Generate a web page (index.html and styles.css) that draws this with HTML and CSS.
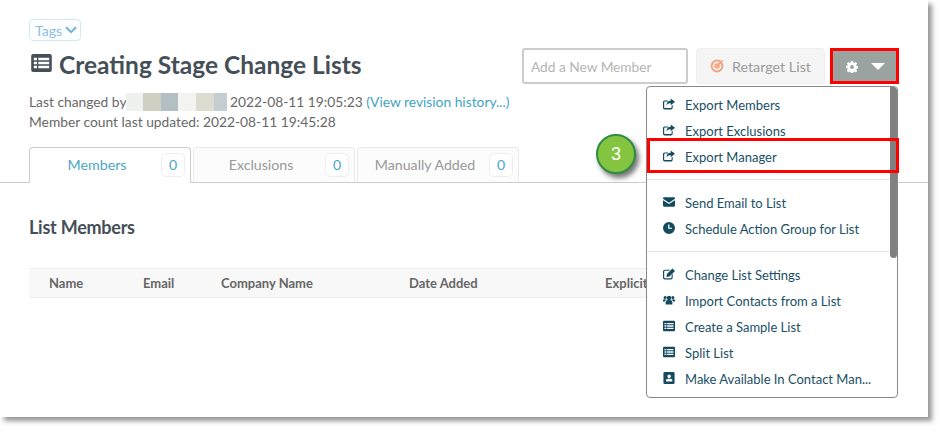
FILE: index.html
```html
<!DOCTYPE html>
<html lang="en">
<head>
<meta charset="utf-8">
<title>Creating Stage Change Lists</title>
<link rel="stylesheet" href="styles.css">
</head>
<body>
<svg class="defs" width="0" height="0" aria-hidden="true">
  <symbol id="i-list" viewBox="0 0 16 14"><path fill-rule="evenodd" d="M1.5 0h13A1.5 1.5 0 0 1 16 1.5v11a1.5 1.5 0 0 1-1.500 1.500h-13A1.500 1.500 0 0 1 0 12.500v-11A1.500 1.500 0 0 1 1.500 0zM2 3v1.800h2.500V3zM5.500 3v1.800H14V3zM2 6.100v1.800h2.500V6.100zM5.500 6.100v1.800H14V6.100zM2 9.200V11h2.500V9.200zM5.500 9.200V11H14V9.200z"/></symbol>
  <symbol id="i-export" viewBox="0 0 14 13"><path d="M1.800 2.500H6v1.200H2.200a.8.800 0 0 0-.8.800v6a.8.800 0 0 0 .8.800h7a.8.800 0 0 0 .8-.8V8.500l1.300-1.100v3.500A2 2 0 0 1 9.300 12.900H2A2 2 0 0 1 0 10.900V4.300a1.800 1.800 0 0 1 1.800-1.800z"/><path d="M9 0l5 4-5 4V5.600c-2.500 0-4 .6-5 3 0-3.500 2-5.800 5-5.800z"/></symbol>
  <symbol id="i-mail" viewBox="0 0 14 11"><path d="M1.300 0h11.400A1.300 1.300 0 0 1 14 1.300v.5L7 6.300 0 1.800v-.5A1.300 1.300 0 0 1 1.300 0z"/><path d="M0 3.400l7 4.500 7-4.500v6.300A1.300 1.300 0 0 1 12.700 11H1.300A1.300 1.300 0 0 1 0 9.700z"/></symbol>
  <symbol id="i-clock" viewBox="0 0 14 14"><path fill-rule="evenodd" d="M7 0a7 7 0 1 1 0 14A7 7 0 0 1 7 0zM6 3v5h4.500V6.600H7.500V3z"/></symbol>
  <symbol id="i-edit" viewBox="0 0 14 13"><path d="M2 1.500h6.500L7.200 2.800H2.200a.8.800 0 0 0-.8.800v7a.8.800 0 0 0 .8.800h7a.8.800 0 0 0 .8-.8V7.500l1.300-1.300v4.600A2 2 0 0 1 9.300 12.800H2a2 2 0 0 1-2-2V3.500a2 2 0 0 1 2-2z"/><path d="M11 0l3 3-6.500 6.500-3.500.6.600-3.600z"/></symbol>
  <symbol id="i-users" viewBox="0 0 16 12"><circle cx="8" cy="3.200" r="3"/><circle cx="2.800" cy="2.600" r="2"/><circle cx="13.200" cy="2.600" r="2"/><path d="M3.500 12V8.500a3 3 0 0 1 3-2.500h3a3 3 0 0 1 3 2.500V12z"/><path d="M0 8V6.500A1.500 1.500 0 0 1 1.500 5h1.800a4 4 0 0 0 .7 1A4 4 0 0 0 2.500 8zM16 8V6.500A1.500 1.500 0 0 0 14.500 5h-1.800a4 4 0 0 1-.7 1 4 4 0 0 1 1.500 2z"/></symbol>
  <symbol id="i-book" viewBox="0 0 13 14"><path fill-rule="evenodd" d="M1.500 0h10A1.500 1.500 0 0 1 13 1.500v11a1.500 1.500 0 0 1-1.500 1.500h-10A1.500 1.500 0 0 1 0 12.500v-11A1.500 1.500 0 0 1 1.500 0zM6.700 3a2.100 2.100 0 1 0 0 4.200 2.100 2.100 0 0 0 0-4.200zM3 11h7.400V9.800A1.800 1.800 0 0 0 8.600 8H4.800A1.800 1.800 0 0 0 3 9.800z"/></symbol>
  <symbol id="i-cog" viewBox="0 0 14 14"><path fill-rule="evenodd" d="M5.700 0h2.600l.3 1.800 1.200.5L11.300 1.200l1.800 1.800-1.100 1.500.5 1.200 1.800.3v2.600l-1.800.3-.5 1.200 1.100 1.500-1.800 1.800-1.500-1.100-1.200.5-.3 1.800H5.700l-.3-1.800-1.200-.5-1.500 1.100L.9 11l1.100-1.500-.5-1.200L-.3 8V5.700l1.800-.2.5-1.200L.9 3l1.800-1.800 1.500 1.100 1.200-.5zM7 4.700a2.300 2.300 0 1 0 0 4.600 2.300 2.300 0 0 0 0-4.600z"/></symbol>
</svg>

<main class="page">
  <div class="top">
    <div class="intro">
      <button class="tags" type="button">Tags
        <svg class="tags-chevron" viewBox="0 0 12 8" aria-hidden="true"><path d="M1 1.200l5 5 5-5"/></svg>
      </button>
      <h1 class="title"><svg class="title-icon" aria-hidden="true"><use href="#i-list"/></svg>Creating Stage Change Lists</h1>
      <p class="meta">Last changed by<span class="blur" aria-hidden="true"><i class="b1"></i><i class="b2"></i><i class="b3"></i><i class="b4"></i><i class="b5"></i><i class="b6"></i></span> 2022-08-11 19:05:23 <a class="link" href="#">(View revision history...)</a></p>
      <p class="meta">Member count last updated: 2022-08-11 19:45:28</p>
    </div>
    <div class="actions">
      <input class="add-member" type="text" placeholder="Add a New Member">
      <button class="retarget" type="button">
        <svg class="target" viewBox="0 0 14 14" aria-hidden="true"><circle cx="7" cy="7" r="5.400"/><circle cx="7" cy="7" r="1.800"/><path d="M7 7l5.500-5.500"/></svg>
        Retarget List
      </button>
      <button class="gear" type="button">
        <svg class="gear-icon" aria-hidden="true"><use href="#i-cog"/></svg>
        <span class="caret"></span>
      </button>
    </div>
  </div>

  <nav class="tabs">
    <a class="tab active" href="#"><span class="tab-label">Members</span><span class="count">0</span></a>
    <a class="tab" href="#"><span class="tab-label">Exclusions</span><span class="count">0</span></a>
    <a class="tab" href="#"><span class="tab-label">Manually Added</span><span class="count">0</span></a>
  </nav>

  <section class="members">
    <h2 class="members-title">List Members</h2>
    <div class="thead">
      <span>Name</span><span>Email</span><span>Company Name</span><span>Date Added</span><span>Explicit</span>
    </div>
  </section>

  <div class="menu">
    <ul class="menu-group">
      <li><svg class="mi"><use href="#i-export"/></svg>Export Members</li>
      <li><svg class="mi"><use href="#i-export"/></svg>Export Exclusions</li>
      <li><svg class="mi"><use href="#i-export"/></svg>Export Manager</li>
    </ul>
    <ul class="menu-group">
      <li><svg class="mi"><use href="#i-mail"/></svg>Send Email to List</li>
      <li><svg class="mi"><use href="#i-clock"/></svg>Schedule Action Group for List</li>
    </ul>
    <ul class="menu-group">
      <li><svg class="mi"><use href="#i-edit"/></svg>Change List Settings</li>
      <li><svg class="mi"><use href="#i-users"/></svg>Import Contacts from a List</li>
      <li><svg class="mi"><use href="#i-list"/></svg>Create a Sample List</li>
      <li><svg class="mi"><use href="#i-list"/></svg>Split List</li>
      <li><svg class="mi"><use href="#i-book"/></svg>Make Available In Contact Man...</li>
    </ul>
    <span class="scroll-thumb"></span>
  </div>

  <span class="mark mark-gear"></span>
  <span class="mark mark-export"></span>
  <span class="step">3</span>
</main>
</body>
</html>
```

FILE: styles.css
```css
* { box-sizing: border-box; }
html, body { margin: 0; padding: 0; background: #fff; }
body { width: 943px; height: 432px; overflow: hidden; font-family: Lato, "Liberation Sans", sans-serif; }
.defs { position: absolute; }

.page {
  position: relative;
  width: 928px;
  height: 417px;
  background: #fff;
  box-shadow: 4px 4px 5px rgba(90, 90, 90, .65);
  overflow: hidden;
  color: #666;
  font-size: 14px;
}

.top { display: flex; justify-content: space-between; padding: 19px 29px 0 29px; height: 147px; }
.intro { display: flex; flex-direction: column; align-items: flex-start; }

.tags {
  display: flex; align-items: center; gap: 3px;
  height: 22px; width: 52px; padding: 0 0 0 5px;
  border: 1px solid #d3e8f5; border-radius: 4px; background: #fbfdfe;
  color: #8dbfdf; font: 14px Lato, sans-serif;
}
.tags-chevron { width: 12px; height: 8px; fill: none; stroke: #6fb4dc; stroke-width: 2; }

.title {
  display: flex; align-items: center;
  margin: 8px 0 0; height: 30px;
  font-size: 24.500px; font-weight: 700; color: #454f57; white-space: nowrap;
}
.title-icon { width: 21px; height: 18px; margin: -3px 7px 0 2px; fill: #454f57; }

.meta { margin: 0; height: 20px; line-height: 20px; font-size: 13.800px; white-space: nowrap; color: #686868; }
.title + .meta { margin-top: 13px; }
.link { color: #3fa4c4; text-decoration: none; }
.blur { display: inline-flex; width: 101px; height: 18px; margin-left: -1px; vertical-align: -4px; }
.blur i { display: block; height: 18px; width: 18px; }
.blur .b1 { background: #eff1ee; }
.blur .b2 { background: #d0cfc4; }
.blur .b3 { background: #b4bfc3; }
.blur .b4 { background: #f3f4f2; }
.blur .b5 { background: #dcdcd0; }
.blur .b6 { background: #c6cdd0; width: 13px; }

.actions { display: flex; align-items: flex-start; padding-top: 29px; height: 65px; }
.add-member {
  width: 166px; height: 36px; padding: 0 7px;
  border: 2px solid #ccc; border-radius: 3px; outline: 0;
  font: 13.700px Lato, sans-serif; background: #fff;
}
.add-member::placeholder { color: #b5b5b5; opacity: 1; }
.retarget {
  display: flex; align-items: center; gap: 8px;
  width: 129px; height: 36px; margin-left: 8px; padding: 0 0 0 13px;
  background: #f5f5f5; border: 1px solid #eee; border-radius: 4px;
  color: #9a9a9a; font: 14.300px Lato, sans-serif;
}
.target { width: 14px; height: 14px; fill: none; stroke: #f4a582; stroke-width: 2; }
.gear {
  display: flex; align-items: center;
  width: 69px; height: 36px; margin-left: 5px; padding: 0 0 0 16px;
  background: #9aa3a0; border: 0;
}
.gear-icon { width: 12px; height: 12px; margin-top: 2px; fill: #fff; }
.caret { margin-left: 13px; width: 0; height: 0; border: 7px solid transparent; border-top: 7px solid #fff; border-bottom: 0; }

.tabs { display: flex; gap: 2px; height: 36px; padding-left: 29px; border-bottom: 1px solid #ccc; }
.tab {
  display: flex; align-items: flex-start; width: 162px; height: 35px; padding: 5px 5px 0 4px;
  border: 1px solid #eaeaea; border-bottom: 0; border-radius: 4px 4px 0 0;
  background: #fcfcfc; color: #999; text-decoration: none;
}
.tab.active { height: 36px; border-color: #ccc; background: #fff; color: #4ba6c6; }
.tab-label { flex: 1; text-align: center; line-height: 24px; padding-right: 1px; font-size: 14.200px; }
.count {
  width: 24px; height: 24px; line-height: 22px; text-align: center;
  border: 1px solid #eee; border-radius: 5px; background: #fff; color: #4ba6c6; font-size: 14px;
}

.members { padding: 0 0 0 29px; }
.members-title { margin: 32px 0 0; height: 24px; line-height: 24px; font-size: 18px; font-weight: 700; color: #454f57; letter-spacing: -.25px; }
.thead {
  display: grid; grid-template-columns: 94px 78px 188px 196px 1fr;
  width: 866px; height: 30px; margin-top: 29px; padding-left: 20px; align-items: center;
  background: #f8f8f8; border-top: 1px solid #eee; border-bottom: 1px solid #eee;
  font-size: 13px; font-weight: 700; color: #666;
}

.menu {
  position: absolute; left: 646px; top: 86px; width: 252px; height: 312px;
  background: #fff; border: 1px solid #888; border-radius: 4px; overflow: hidden;
  color: #1a4f66; font-size: 13px;
}
.menu-group { list-style: none; margin: 0; padding: 10px 0 9px; border-bottom: 1px solid #e5e5e5; }
.menu-group:first-child { padding-top: 5px; }
.menu-group:last-of-type { border-bottom: 0; }
.menu-group li { display: flex; align-items: center; height: 26px; padding-left: 16px; white-space: nowrap; }
.mi { width: 12px; height: 12px; margin-right: 10px; fill: #134a60; flex: none; margin-top: -2px; }
.scroll-thumb { position: absolute; right: 0; top: 0; width: 7px; height: 171px; background: #808080; border-radius: 0 4px 4px 4px; }

.mark { position: absolute; border: 3px solid #f00; }
.mark-gear { left: 830px; top: 48px; width: 69px; height: 36px; }
.mark-export { left: 647px; top: 138px; width: 252px; height: 35px; }
.step {
  position: absolute; left: 596px; top: 134px; width: 40px; height: 40px; text-align: center;
  border: 2px solid #2d8c45; border-radius: 50%; background: #84c441;
  color: #fff; font: 18px/37px "Liberation Sans", sans-serif;
  box-shadow: 3px 4px 5px rgba(60, 60, 60, .7);
}
```
